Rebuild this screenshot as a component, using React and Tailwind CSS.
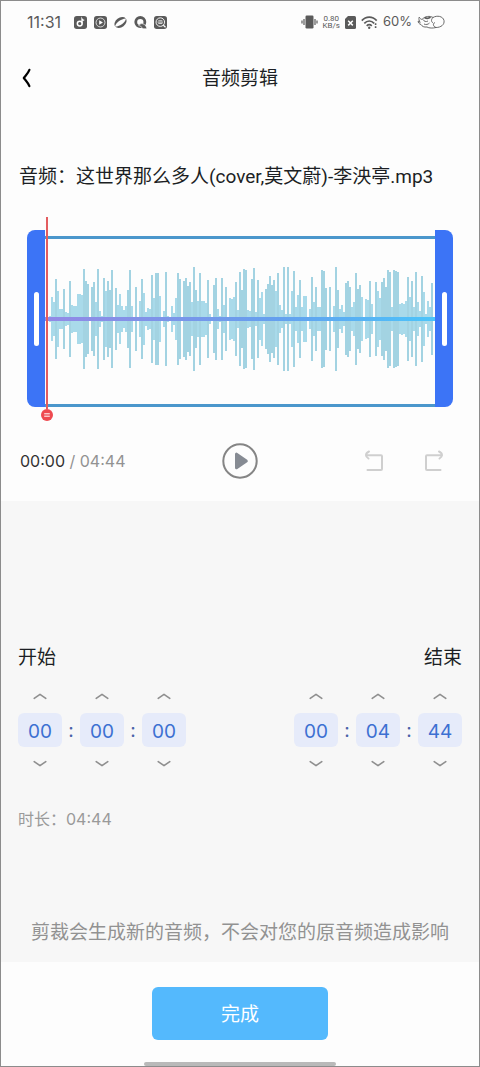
import { useState } from 'react';

// ── Data ─────────────────────────────────────────────────

const FILE_NAME = '这世界那么多人(cover,莫文蔚)-李泱亭.mp3';

// Half height of every bar in the wave form
const PEAKS = [
  3, 22, 17, 40, 28, 10, 10, 30, 7, 6, 38, 14, 13, 13, 25, 25, 24, 50, 38, 35, 0, 32, 37, 17, 50,
  8, 3, 41, 28, 38, 29, 49, 0, 31, 14, 25, 13, 9, 13, 29, 49, 13, 0, 32, 0, 18, 40, 26, 7, 11,
  10, 44, 21, 46, 46, 23, 0, 8, 47, 3, 0, 13, 6, 21, 46, 40, 0, 38, 41, 33, 37, 17, 52, 29, 18,
  46, 18, 18, 16, 39, 5, 0, 34, 41, 10, 3, 41, 14, 32, 0, 21, 20, 22, 37, 9, 47, 29, 50, 49, 9,
  8, 40, 51, 7, 39, 21, 27, 5, 30, 35, 43, 34, 39, 28, 46, 14, 9, 52, 5, 52, 5, 28, 48, 12, 24,
  39, 12, 23, 23, 0, 10, 42, 17, 32, 12, 12, 49, 48, 31, 0, 32, 0, 13, 52, 29, 10, 14, 7, 36, 38,
  32, 12, 17, 46, 30, 34, 22, 0, 20, 19, 38, 15, 0, 37, 28, 21, 37, 41, 32, 49, 47, 12, 49, 48,
  47, 15, 16, 15, 18, 42, 22, 38, 12, 47, 17, 8, 43, 27, 5, 18, 12, 36,
];

const UNITS = ['时', '分', '秒'];

// ── Status bar ───────────────────────────────────────────

function StatusBar() {
  return (
    <div className="flex h-[42px] items-center justify-between pl-[26px] pr-[34px] font-['Inter',sans-serif] text-[#5a5a5a]">
      <div className="flex items-center gap-[7px]">
        <span className="mr-[6px] text-base">11:31</span>
        <svg viewBox="0 0 14 14" className="size-[13px]" aria-hidden="true">
          <rect width="14" height="14" rx="3" fill="currentColor" />
          <circle cx="6.2" cy="8.2" r="2.6" fill="none" stroke="#fff" strokeWidth="1.6" />
          <path d="M8.6 8V3.2c.5.9 1.3 1.3 2.4 1.3" fill="none" stroke="#fff" strokeWidth="1.4" />
        </svg>
        <svg viewBox="0 0 14 14" className="size-[13px]" aria-hidden="true">
          <rect width="14" height="14" rx="3" fill="currentColor" />
          <circle cx="7" cy="7" r="4.8" fill="none" stroke="#fff" strokeWidth=".8" />
          <path d="M5.6 4.6v4.8L9.6 7z" fill="#fff" />
        </svg>
        <svg viewBox="0 0 14 14" className="size-[13px]" aria-hidden="true">
          <ellipse cx="7" cy="7" rx="7.2" ry="5.2" transform="rotate(-38 7 7)" fill="currentColor" />
          <path d="M1 11.4C2 7 7 3.200 13 2.600 12 7.200 7 11 1 11.400z" fill="#fdfdfd" />
        </svg>
        <svg viewBox="0 0 14 14" className="size-[13px]" aria-hidden="true">
          <circle cx="6.8" cy="6.5" r="4.9" fill="none" stroke="currentColor" strokeWidth="3" />
          <path d="M5 10.2c1.6-2.2 4.200-2.700 6.300-.9 1.400 1 2.200 2.500 2.500 4.500H9.600c-1-1.900-2.400-3-4.600-3.600z" fill="currentColor" stroke="#fdfdfd" strokeWidth=".7" />
        </svg>
        <svg viewBox="0 0 14 14" className="size-[13px]" aria-hidden="true">
          <rect width="14" height="14" rx="3" fill="currentColor" />
          <circle cx="6.8" cy="6.6" r="4.6" fill="none" stroke="#fff" strokeWidth="1" />
          <path d="M10 9.8l2.4 2.4" stroke="#fff" strokeWidth="1.4" />
          <path d="M4.6 5.1h4.400M3.800 6.600h6M4.600 8.100h4.400" stroke="#fff" strokeWidth=".8" />
        </svg>
      </div>

      <div className="flex items-center gap-[5px]">
        <svg viewBox="0 0 17 14" className="h-[14px] w-[17px]" aria-hidden="true">
          <rect x="4.5" y=".5" width="8" height="13" rx="1.2" fill="currentColor" />
          <path d="M3 4v6M14 4v6M1 5.5v3M16 5.5v3" stroke="currentColor" strokeWidth="1.2" />
        </svg>
        <span className="flex flex-col items-center font-['Roboto',sans-serif] text-[8px] leading-[7px]">
          <span>0.80</span>
          <span>KB/s</span>
        </span>
        <svg viewBox="0 0 11 13" className="h-[13px] w-[11px]" aria-hidden="true">
          <path d="M3 0h6.5A1.5 1.5 0 0 1 11 1.500v10A1.500 1.500 0 0 1 9.500 13h-8A1.500 1.500 0 0 1 0 11.500V3z" fill="currentColor" />
          <path d="M3.2 4.8l4.6 4.6M7.8 4.8L3.2 9.4" stroke="#fff" strokeWidth="1.5" />
        </svg>
        <svg viewBox="0 0 17 13" className="h-[13px] w-[17px]" aria-hidden="true">
          <path d="M.8 4.600C5-.1 11.500-.1 15.700 4.600M3.300 7.300c3-3.100 6.900-3.100 9.900 0M5.700 9.800c1.600-1.500 3.500-1.500 5.100 0" fill="none" stroke="currentColor" strokeWidth="1.7" />
          <circle cx="8.2" cy="11.7" r="1.2" fill="currentColor" />
          <path d="M14.6 7.2v1.8M14.6 10.3v1.8" stroke="currentColor" strokeWidth="1.6" />
        </svg>
        <span className="text-[13px]">60%</span>
        <svg viewBox="0 0 28 14" className="h-[14px] w-[28px]" fill="none" stroke="currentColor" strokeWidth=".9" aria-hidden="true">
          <path d="M5 4.500C8 1 13 .6 16 2.500c4-2.400 10-1.400 11 3 .8 4-3 7-8 7-3 .8-7 .8-9-.5-3 .4-5-.6-6-2.500-2-.6-3-2-2.800-3.500l2 1.500C2 5.500 1.600 4 2.200 2.200 3 3.500 4 4.200 5 4.500z" />
          <path d="M6 4.500c1 2 3 2.600 5 1.500M16 2.500c-2 2-2 4 0 5.500M19 12.500c-3-1-3.500-4-1-5M7 9c2 1 4 .5 5.500-1" />
          <path d="M7.5 2.500c2 1.200 4 1.200 6-.4" strokeWidth="1.8" />
        </svg>
      </div>
    </div>
  );
}

// ── Trimmer ──────────────────────────────────────────────

function Waveform() {
  return (
    <svg
      viewBox="0 0 390 104"
      preserveAspectRatio="none"
      className="h-[104px] w-full"
      role="img"
      aria-label="音频波形"
    >
      <defs>
        <linearGradient id="axis" x1="0" x2="1" y1="0" y2="0">
          <stop offset="0" stopColor="#9389e6" />
          <stop offset="0.25" stopColor="#8192e8" />
          <stop offset="0.6" stopColor="#64a0ee" />
          <stop offset="1" stopColor="#4cc4fa" />
        </linearGradient>
      </defs>
      {PEAKS.map((peak, i) => (
        <rect key={i} x={4 + i * 2} y={52 - peak} width="2" height={peak * 2} fill={peak > 28 ? '#a3d3e2' : '#a9daea'} />
      ))}
      <rect y="50" width="390" height="4" fill="url(#axis)" />
    </svg>
  );
}

function Handle({ side, label }) {
  return (
    <button
      type="button"
      aria-label={label}
      className={`flex w-[18px] shrink-0 items-center justify-center bg-[#3c74f6] ${
        side === 'left' ? 'rounded-l-lg' : 'rounded-r-lg'
      }`}
    >
      <span className="h-[54px] w-[5px] rounded-full bg-white" />
    </button>
  );
}

function Trimmer() {
  return (
    <div className="relative mx-[26px] flex h-[177px]">
      <Handle side="left" label="开始位置" />
      <div className="mt-[6px] flex min-w-0 flex-1 items-center border-y-3 border-[#4b97cc] pb-[6px]">
        <Waveform />
      </div>
      <Handle side="right" label="结束位置" />

      {/* Playhead */}
      <div className="absolute -top-[13px] left-[14px] flex w-3 flex-col items-center">
        <span className="h-[192px] w-[2px] bg-[#e35d60]" />
        <svg viewBox="0 0 12 12" className="size-3" aria-hidden="true">
          <circle cx="6" cy="6" r="6" fill="#ee4a50" />
          <path d="M3.2 4.8h5.6M3.2 7.2h5.6" stroke="#fff" strokeWidth="1" />
        </svg>
      </div>
    </div>
  );
}

function PlayerControls() {
  return (
    <div className="mt-[36px] grid grid-cols-[1fr_auto_1fr] items-center pl-[19px] pr-[35px]">
      <p className="font-['Inter',sans-serif] text-base text-[#929292]">
        <span className="text-[#333]">00:00</span> / 04:44
      </p>
      <button type="button" aria-label="播放" className="ml-4">
        <svg viewBox="0 0 36 36" className="size-9" aria-hidden="true">
          <circle cx="18" cy="18" r="16.7" fill="none" stroke="#858585" strokeWidth="2" />
          <path d="M14.5 11.2v13.6L24.300 18z" fill="#868b93" stroke="#868b93" strokeWidth="3" strokeLinejoin="round" />
        </svg>
      </button>
      <div className="flex justify-end gap-10 text-[#cfcfcf]">
        <button type="button" aria-label="撤销">
          <svg viewBox="0 0 20 22" className="h-[22px] w-5" fill="none" stroke="currentColor" strokeWidth="2" strokeLinecap="round" strokeLinejoin="round">
            <path d="M5 1.500C2.500 2.800 2 3.800 2 5.200 2 6.600 3 7.600 4.500 8.500M2 5.200h15a1 1 0 0 1 1 1V19a1 1 0 0 1-1 1H3.500" />
          </svg>
        </button>
        <button type="button" aria-label="重做">
          <svg viewBox="0 0 20 22" className="h-[22px] w-5" fill="none" stroke="currentColor" strokeWidth="2" strokeLinecap="round" strokeLinejoin="round">
            <path d="M15 1.500c2.500 1.300 3 2.300 3 3.700 0 1.400-1 2.400-2.500 3.300M18 5.200H3a1 1 0 0 0-1 1V19a1 1 0 0 0 1 1h13.500" />
          </svg>
        </button>
      </div>
    </div>
  );
}

// ── Time picker ──────────────────────────────────────────

function Arrow({ down }) {
  return (
    <svg viewBox="0 0 14 8" className="h-2 w-[14px]" fill="none" stroke="#8f8f8f" strokeWidth="1.6" strokeLinecap="round" strokeLinejoin="round" aria-hidden="true">
      <path d={down ? 'M1.2 1.6L7 5.6l5.8-4' : 'M1.2 6.4L7 2.4l5.8 4'} />
    </svg>
  );
}

function TimePicker({ label, initial }) {
  const [parts, setParts] = useState(initial);

  const setPart = (index, value) => {
    setParts(parts.map((p, i) => (i === index ? value : p)));
  };

  const step = (index, diff) => {
    const next = (Number(parts[index]) + diff + 60) % 60;
    setPart(index, String(next).padStart(2, '0'));
  };

  return (
    <div className="flex items-center font-['Inter',sans-serif] text-[19px]">
      {parts.map((part, i) => (
        <div key={UNITS[i]} className="flex items-center">
          {i > 0 && <span className="w-[18px] text-center leading-none text-[#4a62a8]">:</span>}
          <div className="flex flex-col items-center gap-[13px]">
            <button type="button" aria-label={`${label}${UNITS[i]}加一`} onClick={() => step(i, 1)}>
              <Arrow />
            </button>
            <input
              type="text"
              inputMode="numeric"
              aria-label={`${label}${UNITS[i]}`}
              value={part}
              onChange={(e) => setPart(i, e.target.value)}
              className="h-[34px] w-11 rounded-md bg-[#e6ebfa] pt-[2px] text-center text-[#3d70d2] outline-none"
            />
            <button type="button" aria-label={`${label}${UNITS[i]}减一`} onClick={() => step(i, -1)}>
              <Arrow down />
            </button>
          </div>
        </div>
      ))}
    </div>
  );
}

// ── App ──────────────────────────────────────────────────

export default function App() {
  return (
    <div className="flex min-h-screen flex-col border border-[#8c8c8c] bg-[#fdfdfd] font-['Roboto','Noto_Sans_CJK_SC',sans-serif] text-[#1c1f24]">
      <StatusBar />

      <header className="grid h-[70px] grid-cols-[1fr_auto_1fr] items-center px-5">
        <button type="button" aria-label="返回" className="w-fit text-black">
          <svg viewBox="0 0 12 20" className="h-5 w-3" fill="none" stroke="currentColor" strokeWidth="2.2" strokeLinecap="round" strokeLinejoin="round" aria-hidden="true">
            <path d="M8.4 1.8C7.2 5 4.8 7.4 2.800 10c2 2.600 4.400 5 5.600 8.200" />
          </svg>
        </button>
        <h1 className="pt-[3px] text-[19px]">音频剪辑</h1>
      </header>

      <main className="flex flex-1 flex-col">
        <p className="mt-[50px] mb-[39px] px-[18px] text-[19px] leading-7">音频：{FILE_NAME}</p>
        <Trimmer />
        <PlayerControls />

        <section className="mt-[22px] flex flex-1 flex-col justify-end bg-[#f7f7f7] px-[17px] pt-10 pb-[15px]">
          <div className="flex justify-between text-[19px] leading-7">
            <h2>开始</h2>
            <h2>结束</h2>
          </div>
          <div className="mt-5 flex justify-between">
            <TimePicker label="开始" initial={['00', '00', '00']} />
            <TimePicker label="结束" initial={['00', '04', '44']} />
          </div>
          <p className="mt-[37px] font-['Inter','Noto_Sans_CJK_SC',sans-serif] text-base leading-7 text-[#9a9a9a]">
            时长：04:44
          </p>
          <p className="mt-[86px] text-center text-[19px] leading-7 text-[#929292]">
            剪裁会生成新的音频，不会对您的原音频造成影响
          </p>
        </section>
      </main>

      <footer className="flex flex-col items-center pt-[25px]">
        <button type="button" className="h-[53px] w-44 rounded-md bg-[#54b9fd] pt-[3px] text-[19px] text-white">
          完成
        </button>
        <span className="mt-[22px] h-1 w-48 rounded-full bg-[#b9b9b9]" />
      </footer>
    </div>
  );
}
